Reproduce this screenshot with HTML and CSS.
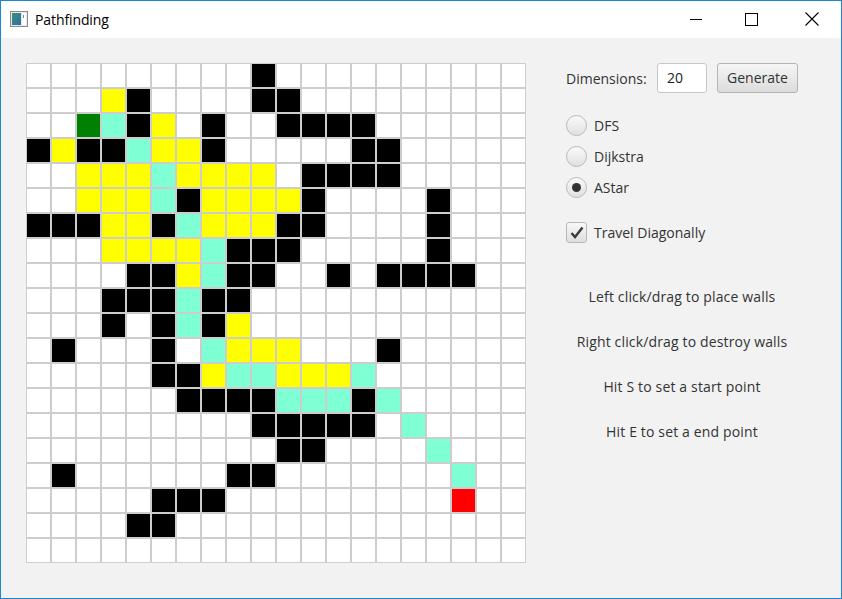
FILE: index.html
```html
<!DOCTYPE html>
<html>
<head>
<meta charset="utf-8">
<title>Pathfinding</title>
<link rel="stylesheet" href="styles.css">
</head>
<body>
<div class="window">
  <div class="titlebar">
    <div class="title-left">
      <svg class="app-icon" width="18" height="16" viewBox="0 0 18 16">
        <defs>
          <linearGradient id="ig" x1="0" y1="0" x2="1" y2="1">
            <stop offset="0" stop-color="#3b8f7a"/>
            <stop offset="1" stop-color="#2e6fa6"/>
          </linearGradient>
        </defs>
        <rect x="0.5" y="0.5" width="17" height="15" fill="#e8e8e8" stroke="#8a8a8a"/>
        <rect x="2" y="2" width="9" height="12" fill="url(#ig)"/>
        <rect x="12" y="2" width="4" height="12" fill="#ffffff"/>
        <rect x="13" y="4" width="1" height="3" fill="#5a8fa0"/>
      </svg>
      <span class="title-text">Pathfinding</span>
    </div>
    <div class="controls">
      <div class="ctl"><svg width="12" height="12" viewBox="0 0 12 12"><path d="M0 6.5H12" stroke="#000" stroke-width="1"/></svg></div>
      <div class="ctl max"><svg width="13" height="13" viewBox="0 0 13 13"><rect x="0.5" y="0.5" width="12" height="12" fill="none" stroke="#000" stroke-width="1"/></svg></div>
      <div class="ctl"><svg width="14" height="14" viewBox="0 0 14 14"><path d="M0.5 0.5L13.5 13.5M13.5 0.5L0.5 13.5" stroke="#000" stroke-width="1.1"/></svg></div>
    </div>
  </div>
  <div class="content">
    <div class="grid">
      <div class="c"></div><div class="c"></div><div class="c"></div><div class="c"></div><div class="c"></div><div class="c"></div><div class="c"></div><div class="c"></div><div class="c"></div><div class="c b"></div><div class="c"></div><div class="c"></div><div class="c"></div><div class="c"></div><div class="c"></div><div class="c"></div><div class="c"></div><div class="c"></div><div class="c"></div><div class="c"></div>
      <div class="c"></div><div class="c"></div><div class="c"></div><div class="c y"></div><div class="c b"></div><div class="c"></div><div class="c"></div><div class="c"></div><div class="c"></div><div class="c b"></div><div class="c b"></div><div class="c"></div><div class="c"></div><div class="c"></div><div class="c"></div><div class="c"></div><div class="c"></div><div class="c"></div><div class="c"></div><div class="c"></div>
      <div class="c"></div><div class="c"></div><div class="c g"></div><div class="c a"></div><div class="c b"></div><div class="c y"></div><div class="c"></div><div class="c b"></div><div class="c"></div><div class="c"></div><div class="c b"></div><div class="c b"></div><div class="c b"></div><div class="c b"></div><div class="c"></div><div class="c"></div><div class="c"></div><div class="c"></div><div class="c"></div><div class="c"></div>
      <div class="c b"></div><div class="c y"></div><div class="c b"></div><div class="c b"></div><div class="c a"></div><div class="c y"></div><div class="c y"></div><div class="c b"></div><div class="c"></div><div class="c"></div><div class="c"></div><div class="c"></div><div class="c"></div><div class="c b"></div><div class="c b"></div><div class="c"></div><div class="c"></div><div class="c"></div><div class="c"></div><div class="c"></div>
      <div class="c"></div><div class="c"></div><div class="c y"></div><div class="c y"></div><div class="c y"></div><div class="c a"></div><div class="c y"></div><div class="c y"></div><div class="c y"></div><div class="c y"></div><div class="c"></div><div class="c b"></div><div class="c b"></div><div class="c b"></div><div class="c b"></div><div class="c"></div><div class="c"></div><div class="c"></div><div class="c"></div><div class="c"></div>
      <div class="c"></div><div class="c"></div><div class="c y"></div><div class="c y"></div><div class="c y"></div><div class="c a"></div><div class="c b"></div><div class="c y"></div><div class="c y"></div><div class="c y"></div><div class="c y"></div><div class="c b"></div><div class="c"></div><div class="c"></div><div class="c"></div><div class="c"></div><div class="c b"></div><div class="c"></div><div class="c"></div><div class="c"></div>
      <div class="c b"></div><div class="c b"></div><div class="c b"></div><div class="c y"></div><div class="c y"></div><div class="c b"></div><div class="c a"></div><div class="c y"></div><div class="c y"></div><div class="c y"></div><div class="c b"></div><div class="c b"></div><div class="c"></div><div class="c"></div><div class="c"></div><div class="c"></div><div class="c b"></div><div class="c"></div><div class="c"></div><div class="c"></div>
      <div class="c"></div><div class="c"></div><div class="c"></div><div class="c y"></div><div class="c y"></div><div class="c y"></div><div class="c y"></div><div class="c a"></div><div class="c b"></div><div class="c b"></div><div class="c b"></div><div class="c"></div><div class="c"></div><div class="c"></div><div class="c"></div><div class="c"></div><div class="c b"></div><div class="c"></div><div class="c"></div><div class="c"></div>
      <div class="c"></div><div class="c"></div><div class="c"></div><div class="c"></div><div class="c b"></div><div class="c b"></div><div class="c y"></div><div class="c a"></div><div class="c b"></div><div class="c b"></div><div class="c"></div><div class="c"></div><div class="c b"></div><div class="c"></div><div class="c b"></div><div class="c b"></div><div class="c b"></div><div class="c b"></div><div class="c"></div><div class="c"></div>
      <div class="c"></div><div class="c"></div><div class="c"></div><div class="c b"></div><div class="c b"></div><div class="c b"></div><div class="c a"></div><div class="c b"></div><div class="c b"></div><div class="c"></div><div class="c"></div><div class="c"></div><div class="c"></div><div class="c"></div><div class="c"></div><div class="c"></div><div class="c"></div><div class="c"></div><div class="c"></div><div class="c"></div>
      <div class="c"></div><div class="c"></div><div class="c"></div><div class="c b"></div><div class="c"></div><div class="c b"></div><div class="c a"></div><div class="c b"></div><div class="c y"></div><div class="c"></div><div class="c"></div><div class="c"></div><div class="c"></div><div class="c"></div><div class="c"></div><div class="c"></div><div class="c"></div><div class="c"></div><div class="c"></div><div class="c"></div>
      <div class="c"></div><div class="c b"></div><div class="c"></div><div class="c"></div><div class="c"></div><div class="c b"></div><div class="c"></div><div class="c a"></div><div class="c y"></div><div class="c y"></div><div class="c y"></div><div class="c"></div><div class="c"></div><div class="c"></div><div class="c b"></div><div class="c"></div><div class="c"></div><div class="c"></div><div class="c"></div><div class="c"></div>
      <div class="c"></div><div class="c"></div><div class="c"></div><div class="c"></div><div class="c"></div><div class="c b"></div><div class="c b"></div><div class="c y"></div><div class="c a"></div><div class="c a"></div><div class="c y"></div><div class="c y"></div><div class="c y"></div><div class="c a"></div><div class="c"></div><div class="c"></div><div class="c"></div><div class="c"></div><div class="c"></div><div class="c"></div>
      <div class="c"></div><div class="c"></div><div class="c"></div><div class="c"></div><div class="c"></div><div class="c"></div><div class="c b"></div><div class="c b"></div><div class="c b"></div><div class="c b"></div><div class="c a"></div><div class="c a"></div><div class="c a"></div><div class="c b"></div><div class="c a"></div><div class="c"></div><div class="c"></div><div class="c"></div><div class="c"></div><div class="c"></div>
      <div class="c"></div><div class="c"></div><div class="c"></div><div class="c"></div><div class="c"></div><div class="c"></div><div class="c"></div><div class="c"></div><div class="c"></div><div class="c b"></div><div class="c b"></div><div class="c b"></div><div class="c b"></div><div class="c b"></div><div class="c"></div><div class="c a"></div><div class="c"></div><div class="c"></div><div class="c"></div><div class="c"></div>
      <div class="c"></div><div class="c"></div><div class="c"></div><div class="c"></div><div class="c"></div><div class="c"></div><div class="c"></div><div class="c"></div><div class="c"></div><div class="c"></div><div class="c b"></div><div class="c b"></div><div class="c"></div><div class="c"></div><div class="c"></div><div class="c"></div><div class="c a"></div><div class="c"></div><div class="c"></div><div class="c"></div>
      <div class="c"></div><div class="c b"></div><div class="c"></div><div class="c"></div><div class="c"></div><div class="c"></div><div class="c"></div><div class="c"></div><div class="c b"></div><div class="c b"></div><div class="c"></div><div class="c"></div><div class="c"></div><div class="c"></div><div class="c"></div><div class="c"></div><div class="c"></div><div class="c a"></div><div class="c"></div><div class="c"></div>
      <div class="c"></div><div class="c"></div><div class="c"></div><div class="c"></div><div class="c"></div><div class="c b"></div><div class="c b"></div><div class="c b"></div><div class="c"></div><div class="c"></div><div class="c"></div><div class="c"></div><div class="c"></div><div class="c"></div><div class="c"></div><div class="c"></div><div class="c"></div><div class="c r"></div><div class="c"></div><div class="c"></div>
      <div class="c"></div><div class="c"></div><div class="c"></div><div class="c"></div><div class="c b"></div><div class="c b"></div><div class="c"></div><div class="c"></div><div class="c"></div><div class="c"></div><div class="c"></div><div class="c"></div><div class="c"></div><div class="c"></div><div class="c"></div><div class="c"></div><div class="c"></div><div class="c"></div><div class="c"></div><div class="c"></div>
      <div class="c"></div><div class="c"></div><div class="c"></div><div class="c"></div><div class="c"></div><div class="c"></div><div class="c"></div><div class="c"></div><div class="c"></div><div class="c"></div><div class="c"></div><div class="c"></div><div class="c"></div><div class="c"></div><div class="c"></div><div class="c"></div><div class="c"></div><div class="c"></div><div class="c"></div><div class="c"></div>
    </div>
    <div class="panel">
      <div class="dim-row">
        <span class="dim-label">Dimensions:</span>
        <div class="textfield">20</div>
        <div class="button">Generate</div>
      </div>
      <div class="radios">
        <div class="radio-row"><span class="radio"></span><span class="lbl">DFS</span></div>
        <div class="radio-row"><span class="radio"></span><span class="lbl">Dijkstra</span></div>
        <div class="radio-row"><span class="radio on"><span class="dot"></span></span><span class="lbl">AStar</span></div>
      </div>
      <div class="check-row">
        <span class="checkbox"><svg width="14" height="13" viewBox="0 0 14 13"><path d="M1.5 7L5 11L12.5 1.5" fill="none" stroke="#3a3a3a" stroke-width="2.4"/></svg></span>
        <span class="lbl">Travel Diagonally</span>
      </div>
      <div class="help">
        <p>Left click/drag to place walls</p>
        <p>Right click/drag to destroy walls</p>
        <p>Hit S to set a start point</p>
        <p>Hit E to set a end point</p>
      </div>
    </div>
  </div>
</div>
</body>
</html>
```

FILE: styles.css
```css
html, body {
  margin: 0;
  padding: 0;
  background: #f2f2f2;
}
body {
  font-family: "Open Sans", "Noto Sans", "DejaVu Sans", sans-serif;
  color: #333333;
}
.window {
  width: 840px;
  height: 597px;
  border: 1px solid #1c86d6;
  background: #f2f2f2;
  display: flex;
  flex-direction: column;
}
.titlebar {
  height: 37px;
  background: #ffffff;
  display: flex;
  align-items: center;
  justify-content: space-between;
  flex: none;
}
.title-left {
  display: flex;
  align-items: center;
  padding-left: 9px;
  margin-top: -1px;
}
.app-icon {
  display: block;
}
.title-text {
  margin-left: 7px;
  font-size: 14px;
  color: #000000;
  letter-spacing: -0.1px;
}
.controls {
  display: flex;
  height: 37px;
}
.ctl {
  width: 58px;
  display: flex;
  align-items: center;
  justify-content: center;
  margin-top: -1px;
}
.ctl.max {
  padding-right: 6px;
  width: 52px;
}
.ctl svg {
  display: block;
}
.content {
  display: flex;
  padding: 25px 0 0 25px;
}
.grid {
  display: grid;
  grid-template-columns: repeat(20, 25px);
  grid-template-rows: repeat(20, 25px);
  flex: none;
}
.c {
  box-sizing: border-box;
  border: 1px solid #cdcdcd;
  background: #ffffff;
}
.c.b { background: #000000; }
.c.y { background: #ffff00; }
.c.a { background: #7fffd4; }
.c.g { background: #008000; }
.c.r { background: #ff0000; }
.panel {
  margin-left: 40px;
  width: 232px;
  display: flex;
  flex-direction: column;
  font-size: 14px;
}
.dim-row {
  display: flex;
  align-items: center;
  height: 30px;
}
.dim-label {
  width: 91px;
}
.textfield {
  box-sizing: border-box;
  width: 50px;
  height: 30px;
  background: #ffffff;
  border: 1px solid #c6c6c6;
  border-radius: 3px;
  padding-left: 9px;
  line-height: 28px;
  color: #222;
}
.button {
  box-sizing: border-box;
  margin-left: 10px;
  width: 81px;
  height: 30px;
  border: 1px solid #b4b4b4;
  border-radius: 3px;
  background: linear-gradient(#f6f6f6, #dcdcdc);
  text-align: center;
  line-height: 28px;
  color: #333;
}
.radios {
  margin-top: 22px;
  display: flex;
  flex-direction: column;
  gap: 11px;
}
.radio-row, .check-row {
  display: flex;
  align-items: center;
  height: 20px;
}
.radio {
  box-sizing: border-box;
  width: 21px;
  height: 21px;
  border-radius: 50%;
  border: 1px solid #b9b9b9;
  background: linear-gradient(#fafafa, #e0e0e0);
  display: flex;
  align-items: center;
  justify-content: center;
  flex: none;
}
.dot {
  width: 9px;
  height: 9px;
  border-radius: 50%;
  background: #333333;
}
.lbl {
  margin-left: 7px;
}
.check-row {
  margin-top: 24px;
  height: 22px;
}
.checkbox {
  box-sizing: border-box;
  width: 21px;
  height: 21px;
  border-radius: 3px;
  border: 1px solid #b9b9b9;
  background: linear-gradient(#f8f8f8, #dedede);
  display: flex;
  align-items: center;
  justify-content: center;
  flex: none;
}
.checkbox svg {
  display: block;
}
.help {
  margin-top: 44px;
  display: flex;
  flex-direction: column;
  gap: 25px;
}
.help p {
  margin: 0;
  height: 20px;
  line-height: 20px;
  text-align: center;
  letter-spacing: 0.15px;
}
```
